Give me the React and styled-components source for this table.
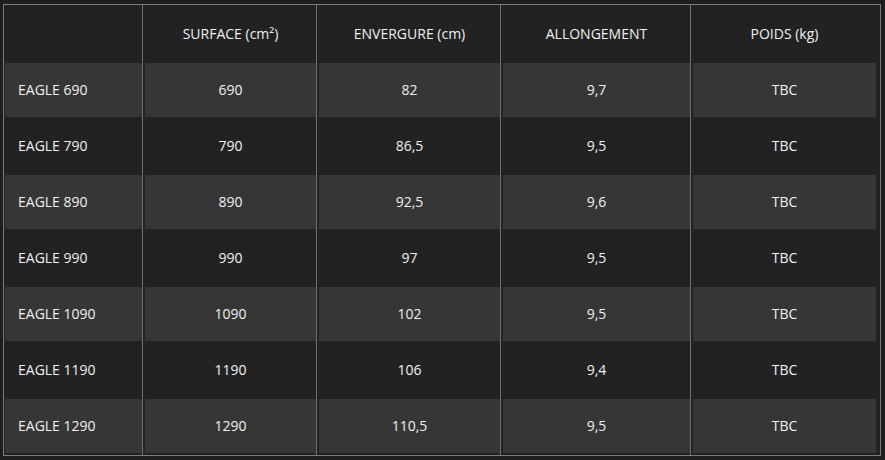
import styled, { createGlobalStyle } from "styled-components";

const GlobalStyle = createGlobalStyle`
  body {
    margin: 0;
    background-color: #1e1e1e;
    font-family: "Open Sans", "Liberation Sans", sans-serif;
  }
`;

const Page = styled.div`
  padding: 4px 0 0 3px;
`;

const Table = styled.div`
  display: grid;
  grid-template-columns: 139px 174px 184px 190px 189px;
  grid-template-rows: 58px repeat(7, 56px);
  width: 878px;
  box-sizing: border-box;
  border: 1px solid #7c7c7c;
  background-color: #222;
`;

const Cell = styled.div`
  display: flex;
  padding-left: ${(props) => (props.$first ? "1px" : "2px")};
  padding-bottom: ${(props) => (props.$header ? "0" : "2px")};
  border-right: ${(props) => (props.$last ? "4px solid #222" : "1px solid #6f6f6f")};
`;

const Fill = styled.div`
  flex: 1;
  display: flex;
  align-items: center;
  justify-content: ${(props) => (props.$left ? "flex-start" : "center")};
  padding-left: ${(props) => (props.$left ? "13px" : "0")};
  padding-bottom: 2px;
  background-color: ${(props) => (props.$striped ? "#363636" : "transparent")};
  color: #f0f0f0;
  font-size: 14px;
  font-weight: 400;
  white-space: nowrap;
`;

const headers = ["", "SURFACE (cm²)", "ENVERGURE (cm)", "ALLONGEMENT", "POIDS (kg)"];

const rows = [
  ["EAGLE 690", "690", "82", "9,7", "TBC"],
  ["EAGLE 790", "790", "86,5", "9,5", "TBC"],
  ["EAGLE 890", "890", "92,5", "9,6", "TBC"],
  ["EAGLE 990", "990", "97", "9,5", "TBC"],
  ["EAGLE 1090", "1090", "102", "9,5", "TBC"],
  ["EAGLE 1190", "1190", "106", "9,4", "TBC"],
  ["EAGLE 1290", "1290", "110,5", "9,5", "TBC"],
];

export default function App() {
  return (
    <>
      <GlobalStyle />
      <Page>
        <Table>
          {headers.map((h, i) => (
            <Cell key={"h" + i} $header $first={i === 0} $last={i === 4}>
              <Fill>{h}</Fill>
            </Cell>
          ))}
          {rows.map((row, r) =>
            row.map((value, i) => (
              <Cell key={r + "-" + i} $first={i === 0} $last={i === 4}>
                <Fill $left={i === 0} $striped={r % 2 === 0}>
                  {value}
                </Fill>
              </Cell>
            ))
          )}
        </Table>
      </Page>
    </>
  );
}
